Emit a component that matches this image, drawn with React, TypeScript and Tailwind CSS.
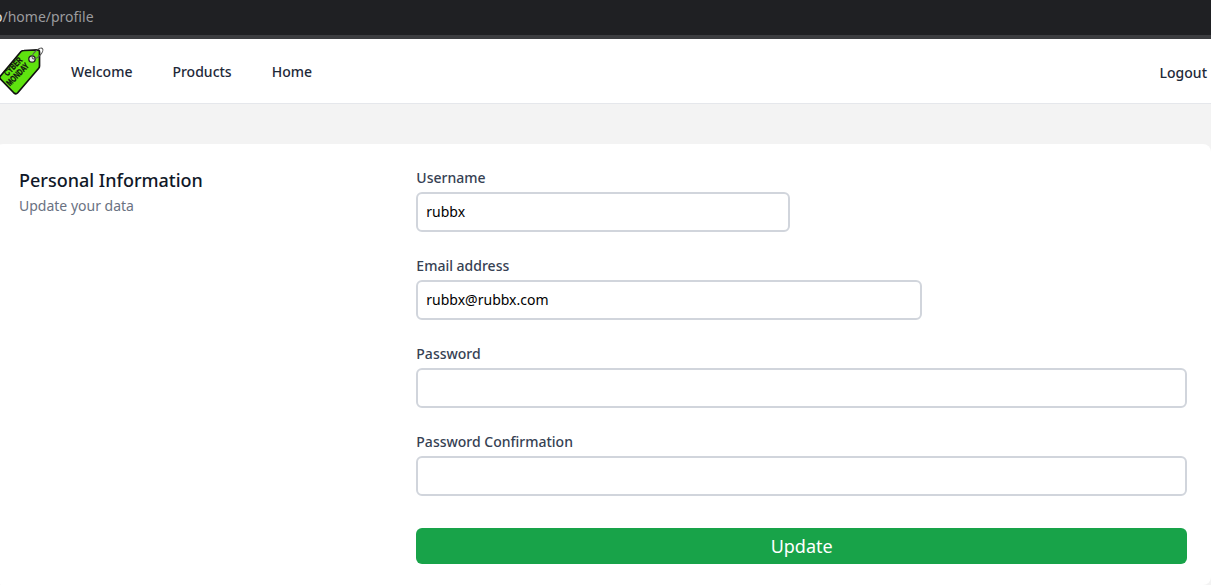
import React from "react";

const Logo = () => (
  <svg width="48" height="52" viewBox="0 0 48 52" className="-ml-[4px] shrink-0">
    <path d="M25 6.5 Q26 5.5 28 5.5 L41.5 4.8 Q43.5 4.8 43.5 7 L43.5 21 Q43.5 22.5 42.5 23.5 L21.5 48 Q20 49.5 18 48 L4.5 34 Q3 32.5 4.5 31 Z" fill="#5fe30f" stroke="#111" strokeWidth="1.7" strokeLinejoin="round" />
    <circle cx="36" cy="14" r="3.2" fill="#e8e8e8" stroke="#222" strokeWidth="1.3" />
    <ellipse cx="41.5" cy="8.5" rx="7" ry="3" transform="rotate(-45 41.5 8.5)" fill="none" stroke="#555" strokeWidth="1.1" />
    <text x="0" y="0" transform="translate(11.5 31.5) rotate(-46)" fontFamily="Liberation Sans, sans-serif" fontWeight="700" fontSize="9" textLength="22" lengthAdjust="spacingAndGlyphs" fill="#111" stroke="#111" strokeWidth="0.3">CYBER</text>
    <text x="0" y="0" transform="translate(14 41.5) rotate(-46)" fontFamily="Liberation Sans, sans-serif" fontWeight="700" fontSize="9" textLength="28" lengthAdjust="spacingAndGlyphs" fill="#111" stroke="#111" strokeWidth="0.3">MONDAY</text>
  </svg>
);

const Field = ({ label, value, width }: { label: string; value?: string; width: string }) => (
  <div>
    <label className="block text-sm font-medium text-gray-700 leading-5">{label}</label>
    <input
      type="text"
      readOnly
      value={value ?? ""}
      className={`mt-1 block h-10 px-2 pb-0.5 rounded-md border-2 border-gray-300 bg-white text-sm text-black outline-none ${width}`}
    />
  </div>
);

export default function App() {
  return (
    <div className="h-[585px] overflow-hidden bg-[#f3f3f3] font-['Noto_Sans',sans-serif]">
      {/* Browser address bar */}
      <div className="h-[35px] bg-[#1f2023] overflow-hidden flex items-center pb-0.5">
        <span className="-ml-[6px] text-sm text-[#9b9c9e]">
          <span className="text-[#e8e8e8]">o</span>/home/profile
        </span>
      </div>
      <div className="h-1 bg-[#3c3d40]" />

      {/* Nav */}
      <nav className="h-[65px] bg-white border-b border-gray-200 flex items-center">
        <Logo />
        <div className="flex items-center gap-10 ml-[27px] pt-0.5 text-sm font-medium text-gray-800">
          <a>Welcome</a>
          <a>Products</a>
          <a>Home</a>
        </div>
        <a className="ml-auto mr-[4px] pt-1 text-sm font-medium text-gray-800">Logout</a>
      </nav>

      {/* Profile card */}
      <div className="mt-10 -ml-[5px] w-[1216px] h-[441px] bg-white rounded-lg p-6 grid grid-cols-3 gap-6">
        <div>
          <h3 className="text-lg font-medium leading-6 text-gray-900">Personal Information</h3>
          <p className="mt-1 text-sm text-gray-500">Update your data</p>
        </div>
        <div className="col-span-2 flex flex-col gap-6">
          <Field label="Username" value="rubbx" width="w-[374px]" />
          <Field label="Email address" value="rubbx@rubbx.com" width="w-[506px]" />
          <Field label="Password" width="w-full" />
          <Field label="Password Confirmation" width="w-full" />
          <button className="mt-2 h-9 rounded-md bg-[#18a349] text-lg text-white">Update</button>
        </div>
      </div>
    </div>
  );
}
